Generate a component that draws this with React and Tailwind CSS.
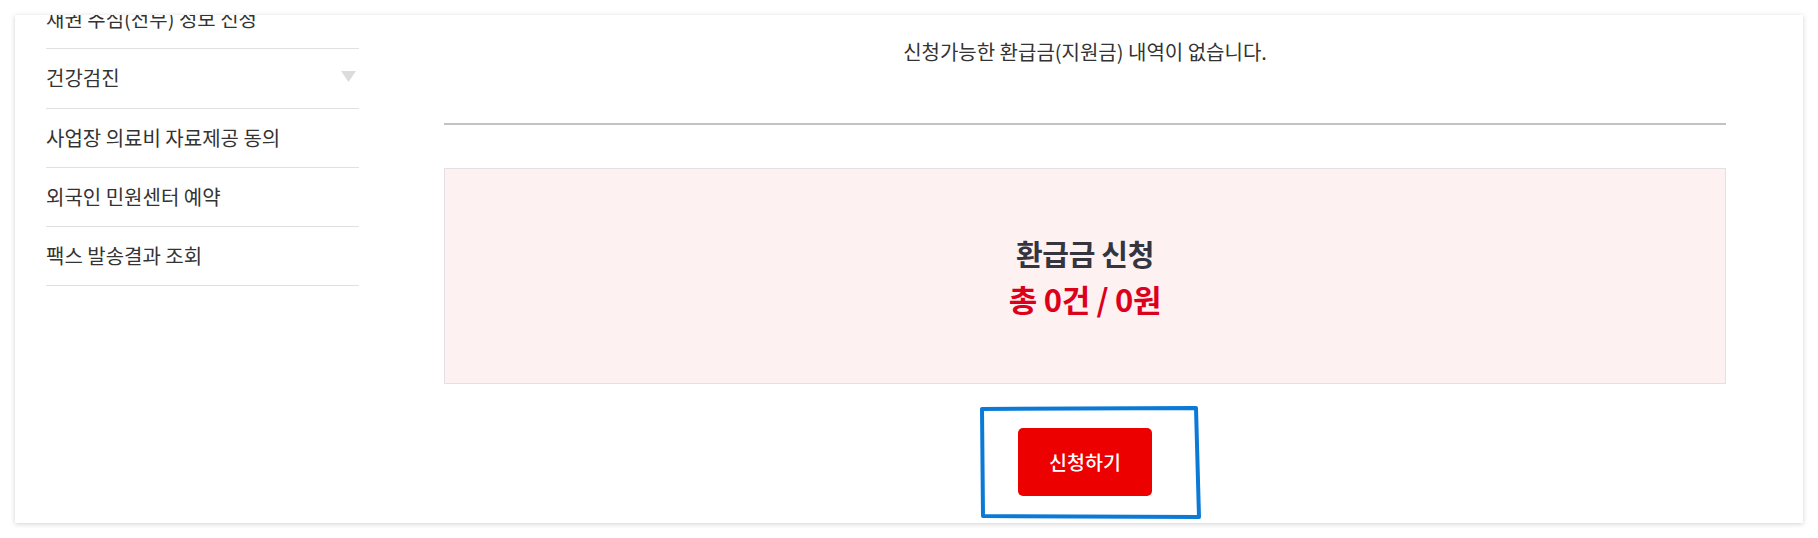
import React from "react";

const menu = [
  { label: "채권 추심(전부) 정보 신청" },
  { label: "건강검진", arrow: true },
  { label: "사업장 의료비 자료제공 동의" },
  { label: "외국인 민원센터 예약" },
  { label: "팩스 발송결과 조회" },
];

export default function App() {
  return (
    <div className="relative w-[1818px] h-[538px] bg-white p-[15px] font-['Noto_Sans_CJK_KR','Noto_Sans',sans-serif] text-[#333]">
      <div className="flex h-[508px] w-full overflow-hidden bg-white shadow-[0_1px_5px_rgba(0,0,0,0.18)]">
        {/* Sidebar */}
        <ul className="ml-[31px] mt-[-25px] w-[313px] shrink-0 self-start">
          {menu.map((m) => (
            <li
              key={m.label}
              className="flex h-[59.3px] items-center justify-between border-b border-[#e0e0e0] text-[20px]"
            >
              <span>{m.label}</span>
              {m.arrow && (
                <svg width="15" height="11" viewBox="0 0 15 11" className="mr-[3px] mt-[-4px]">
                  <polygon points="0,0 15,0 7.5,11" fill="#dcdcdc" />
                </svg>
              )}
            </li>
          ))}
        </ul>

        {/* Content */}
        <div className="ml-[85px] flex w-[1282px] shrink-0 flex-col items-center pt-[23px]">
          <p className="h-[28px] text-[20px] leading-[28px]">
            신청가능한 환급금(지원금) 내역이 없습니다.
          </p>
          <div className="mt-[57px] h-[2px] w-full bg-[#c2c2c6]" />
          <div className="mt-[43px] flex h-[216px] w-full flex-col items-center justify-center border border-[#e4e0e3] bg-[#fdf1f2]">
            <p className="text-[29px] font-bold leading-[45px] tracking-[-0.3px] text-[#35353f]">환급금 신청</p>
            <p className="text-[31px] font-bold leading-[45px] tracking-[-0.3px] text-[#dc001b]">총 0건 / 0원</p>
          </div>
          <button className="mt-[44px] flex h-[68px] w-[134px] items-center justify-center rounded-[5px] bg-[#ec0000] text-[19.5px] font-medium text-white">
            신청하기
          </button>
        </div>
      </div>

      {/* Annotation overlay */}
      <svg
        className="absolute left-[978px] top-[404px]"
        width="226"
        height="118"
        viewBox="0 0 226 118"
      >
        <polygon
          points="4,5 218,4 221,113 5,112"
          fill="none"
          stroke="#0a7ad6"
          strokeWidth="4"
          strokeLinejoin="round"
        />
      </svg>
    </div>
  );
}
